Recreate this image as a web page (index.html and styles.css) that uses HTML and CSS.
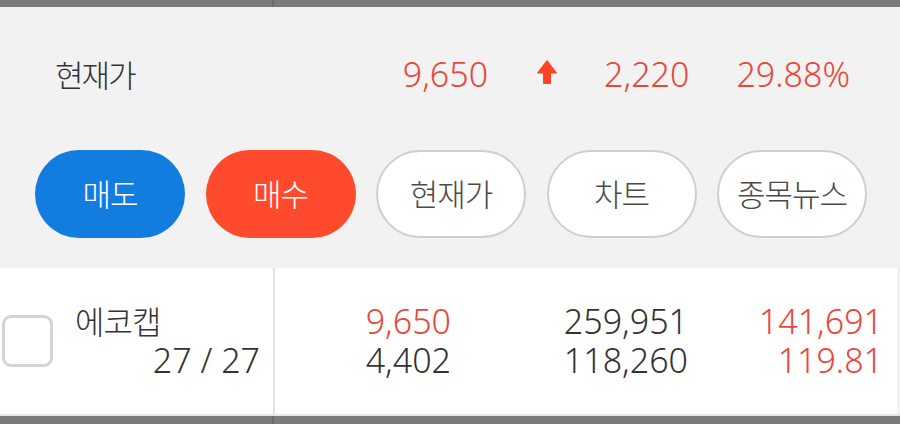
FILE: index.html
```html
<!DOCTYPE html>
<html lang="ko">
<head>
<meta charset="utf-8">
<title>현재가</title>
<link rel="stylesheet" href="styles.css">
</head>
<body>
<div class="screen">
  <div class="bar bar-top"><div class="bar-left"></div><div class="bar-right"></div></div>

  <div class="price-row">
    <div class="price-label">현재가</div>
    <div class="price-val red">9,650</div>
    <svg class="arrow" width="20" height="24" viewBox="0 0 20 24"><polygon points="10,0.5 19.5,13 13.5,13 13.5,23.5 6.5,23.5 6.5,13 0.5,13" fill="#ff4422" stroke="#ff4422" stroke-width="1" stroke-linejoin="round"/></svg>
    <div class="price-val red">2,220</div>
    <div class="price-val red">29.88%</div>
  </div>

  <div class="btn-row">
    <div class="btn btn-sell">매도</div>
    <div class="btn btn-buy">매수</div>
    <div class="btn btn-plain">현재가</div>
    <div class="btn btn-plain">차트</div>
    <div class="btn btn-plain">종목뉴스</div>
  </div>

  <div class="stock-row">
    <div class="stock-left">
      <div class="checkbox"></div>
      <div class="stock-name">
        <div class="name">에코캡</div>
        <div class="qty">27 / 27</div>
      </div>
    </div>
    <div class="stock-right">
      <div class="col"><div class="red">9,650</div><div>4,402</div></div>
      <div class="col"><div>259,951</div><div>118,260</div></div>
      <div class="col"><div class="red">141,691</div><div class="red">119.81</div></div>
    </div>
  </div>

  <div class="bar bar-bottom"><div class="bar-left"></div><div class="bar-right"></div></div>
</div>
</body>
</html>
```
FILE: styles.css
```css
html, body {
  margin: 0;
  padding: 0;
}
body {
  background: #f2f2f2;
  font-family: "Noto Sans", "Noto Sans CJK KR", sans-serif;
  font-weight: 300;
  color: #333333;
}
.screen {
  width: 900px;
  height: 424px;
  overflow: hidden;
  display: flex;
  flex-direction: column;
}
.bar {
  display: flex;
  background: #7b7b7b;
}
.bar-left {
  width: 272px;
  border-right: 2px solid #6c6c6c;
}
.bar-right {
  flex: 1;
}
.bar-top {
  height: 7px;
  flex: none;
}
.bar-bottom {
  height: 8px;
  flex: none;
  border-top: 2px solid #e6e6e6;
}
.red {
  color: #e9473a;
}
.price-row {
  height: 133px;
  flex: none;
  display: flex;
  align-items: center;
  gap: 47px;
  padding: 0 50px 0 55px;
  font-size: 34px;
}
.price-label {
  flex: 1;
  font-size: 31px;
  letter-spacing: -2px;
  color: #333333;
}
.arrow {
  display: block;
  margin-top: -4px;
  margin-left: 2px;
}
.btn-row {
  flex: none;
  display: flex;
  gap: 20.5px;
  padding: 10px 0 0 35px;
  height: 88px;
  margin-bottom: 30px;
}
.btn {
  box-sizing: border-box;
  width: 150px;
  height: 88px;
  border-radius: 44px;
  display: flex;
  align-items: center;
  justify-content: center;
  font-size: 31px;
  letter-spacing: -1px;
  padding-bottom: 4px;
}
.btn-sell {
  background: #127ddf;
  color: #ffffff;
}
.btn-buy {
  background: #ff4a2d;
  color: #ffffff;
}
.btn-plain {
  background: #ffffff;
  border: 2px solid #cfcfcf;
  color: #4a4a4a;
}
.stock-row {
  flex: none;
  width: 897px;
  height: 146px;
  background: #ffffff;
  display: flex;
}
.stock-left {
  box-sizing: border-box;
  width: 275px;
  border-right: 2px solid #e2e2e2;
  display: flex;
  align-items: center;
}
.checkbox {
  box-sizing: border-box;
  width: 51px;
  height: 52px;
  margin-left: 2px;
  border: 3px solid #d4d4d4;
  border-radius: 9px;
}
.stock-name {
  margin-left: 22px;
  width: 185px;
  display: flex;
  flex-direction: column;
  font-size: 34px;
  line-height: 39px;
}
.name {
  font-size: 32px;
  letter-spacing: -1px;
}
.qty {
  text-align: right;
}
.stock-right {
  display: grid;
  grid-template-columns: 176px 237px 195px;
  align-content: center;
  font-size: 34px;
  line-height: 39px;
}
.col {
  text-align: right;
}
```
